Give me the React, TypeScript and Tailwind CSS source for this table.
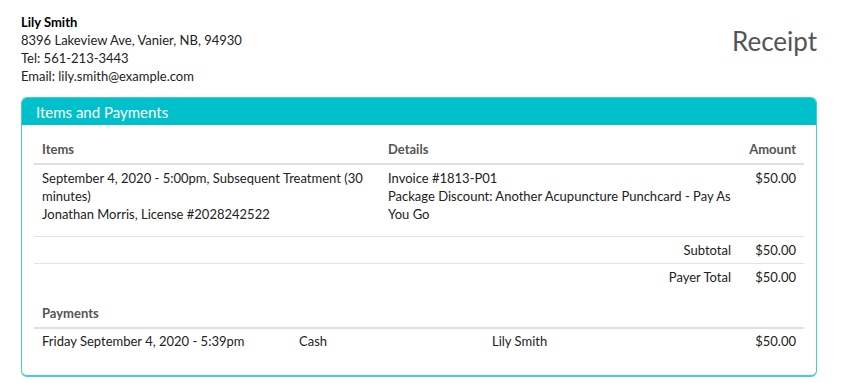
import * as React from 'react';

const font = { fontFamily: 'Lato, "Open Sans", sans-serif' };

type Payment = { date: string; method: string; payer: string; amount: string };

const payments: Payment[] = [
  { date: 'Friday September 4, 2020 - 5:39pm', method: 'Cash', payer: 'Lily Smith', amount: '$50.00' },
];

function TotalRow({ label, value }: { label: string; value: string }) {
  return (
    <div className="grid grid-cols-[346px_359px_1fr] border-t border-[#e3e3e3]">
      <div />
      <div className="px-2 pt-[4px] pb-[4px] text-right">{label}</div>
      <div className="px-2 pt-[4px] pb-[4px] text-right">{value}</div>
    </div>
  );
}

export default function App() {
  return (
    <div className="w-[850px] h-[383px] bg-white pl-[21px] pr-[33px] text-[13px] leading-[18px] text-[#222]" style={font}>
      <div className="flex justify-between items-start pt-[13px]">
        <div>
          <div className="font-bold text-black">Lily Smith</div>
          <div>8396 Lakeview Ave, Vanier, NB, 94930</div>
          <div>Tel: 561-213-3443</div>
          <div>Email: lily.smith@example.com</div>
        </div>
        <div className="mt-[13px] text-[26px] leading-[30px] text-[#555]">Receipt</div>
      </div>

      <div className="mt-[12px] rounded-[6px] border border-[#3fcfd5] border-b-2 overflow-hidden">
        <div className="bg-[#00c1cb] h-[27px] px-[14px] flex items-center text-white text-[15px]">
          Items and Payments
        </div>

        <div className="px-3 pt-[15px] pb-[25px]">
          {/* items table */}
          <div className="grid grid-cols-[346px_359px_1fr] font-bold text-[#555] border-b-2 border-[#e0e0e0]">
            <div className="px-2 pb-[5px]">Items</div>
            <div className="px-2 pb-[5px]">Details</div>
            <div className="px-2 pb-[5px] text-right">Amount</div>
          </div>
          <div className="grid grid-cols-[346px_359px_1fr]">
            <div className="px-2 pt-[4px] pb-[13px]">
              <div>September 4, 2020 - 5:00pm, Subsequent Treatment (30 minutes)</div>
              <div>Jonathan Morris, License #2028242522</div>
            </div>
            <div className="px-2 pt-[4px] pb-[13px]">
              <div>Invoice #1813-P01</div>
              <div>Package Discount: Another Acupuncture Punchcard - Pay As You Go</div>
            </div>
            <div className="px-2 pt-[4px] pb-[13px] text-right">$50.00</div>
          </div>
          <TotalRow label="Subtotal" value="$50.00" />
          <TotalRow label="Payer Total" value="$50.00" />

          {/* payments table */}
          <div className="mt-[14px] font-bold text-[#555] border-b-2 border-[#e0e0e0] px-2 pb-[5px]">Payments</div>
          {payments.map((p) => (
            <div key={p.date} className="grid grid-cols-[257px_193px_1fr_100px]">
              <div className="px-2 pt-[3px]">{p.date}</div>
              <div className="px-2 pt-[3px]">{p.method}</div>
              <div className="px-2 pt-[3px]">{p.payer}</div>
              <div className="px-2 pt-[3px] text-right">{p.amount}</div>
            </div>
          ))}
        </div>
      </div>
    </div>
  );
}
